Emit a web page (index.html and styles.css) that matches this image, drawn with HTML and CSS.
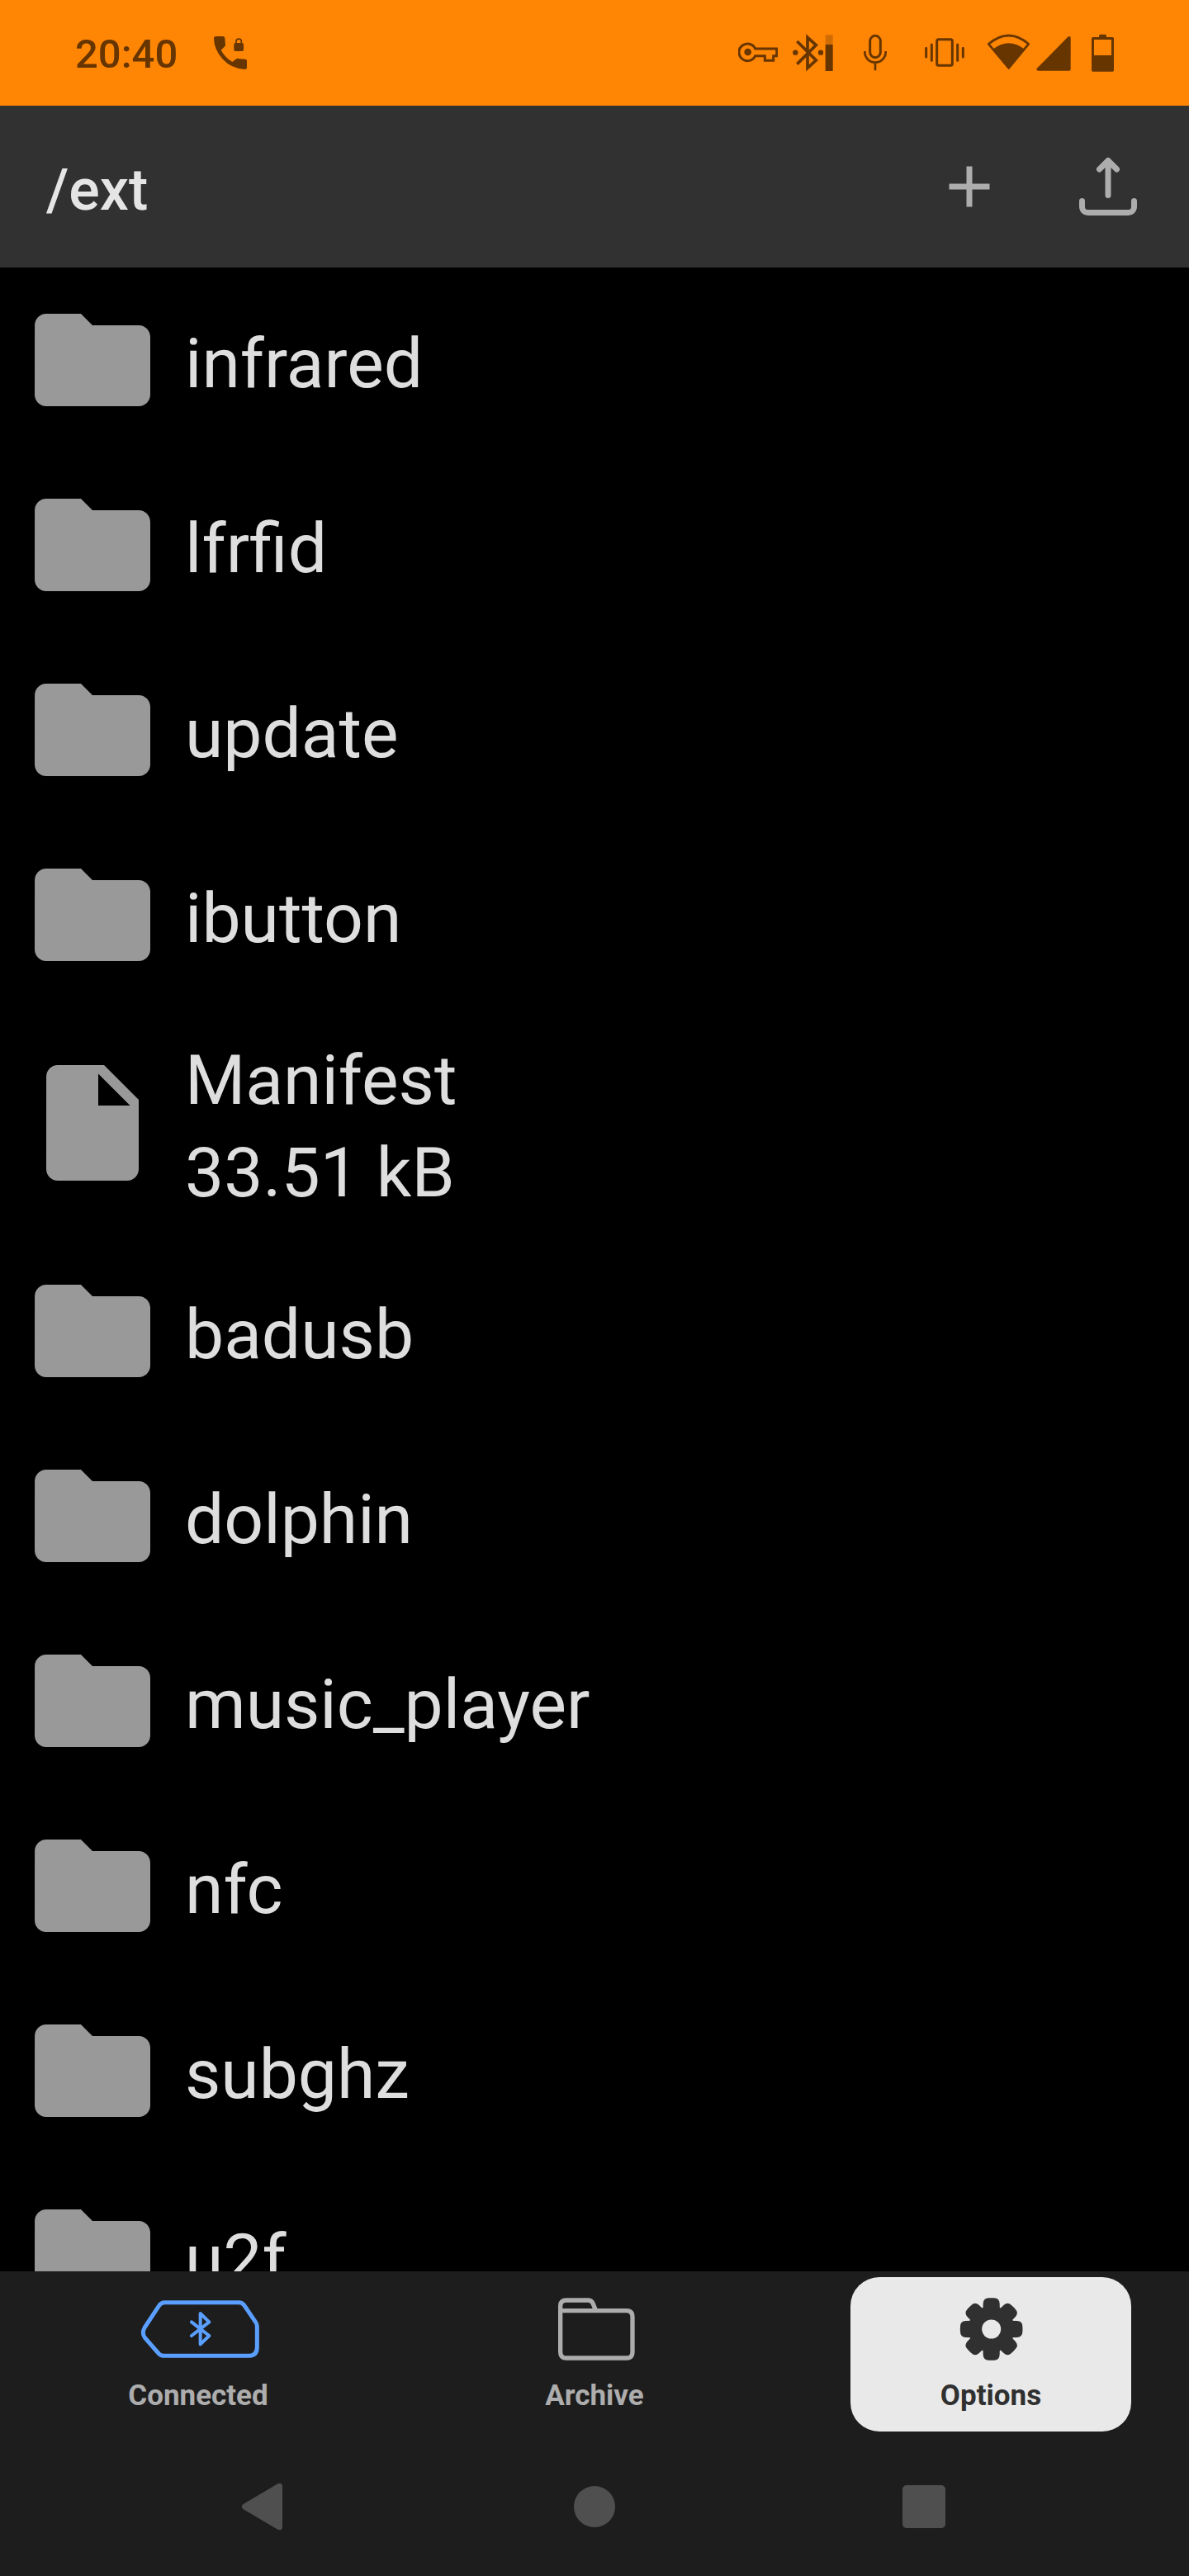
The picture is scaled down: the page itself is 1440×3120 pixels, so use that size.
FILE: index.html
```html
<!DOCTYPE html>
<html lang="en">
<head>
<meta charset="utf-8">
<meta name="viewport" content="width=device-width, initial-scale=1">
<title>/ext</title>
<link rel="stylesheet" href="styles.css">
</head>
<body>
<svg class="sprite" aria-hidden="true">
  <symbol id="folder" viewBox="0 0 24 24"><path d="M10 4H4c-1.1 0-1.99.9-1.99 2L2 18c0 1.1.9 2 2 2h16c1.1 0 2-.9 2-2V8c0-1.1-.9-2-2-2h-8l-2-2z"/></symbol>
  <symbol id="file" viewBox="0 0 24 24"><path d="M6 2c-1.1 0-1.99.9-1.99 2L4 20c0 1.1.89 2 1.99 2H18c1.1 0 2-.9 2-2V8l-6-6H6zm7 7V3.5L18.5 9H13z"/></symbol>
</svg>

<div class="status-bar">
  <span class="clock">20:40</span>
  <svg class="call" viewBox="597 60 123 144" aria-label="Secure call"><path d="M604 72h26q6 0 7 6l2 28-16 16q14 26 41 43l17-13q18 3 30 3 6 0 6 6v24q0 7-7 7-50-2-82-38-31-35-31-75 0-7 7-7z"/><path d="M676 96h23q6 0 6 6v18q0 6-6 6h-23q-6 0-6-6v-18q0-6 6-6z"/><path class="line" stroke-width="5" d="M678 98v-7a9.500 9.500 0 0 1 19 0v7"/></svg>
  <div class="status-icons">
    <svg class="key" viewBox="42 60 144 144" aria-label="VPN"><path class="line" stroke-width="9" d="M104 117H182V143H170V160H139V143H104A31 31 0 1 1 104 117Z"/><circle cx="77" cy="129" r="13"/></svg>
    <svg class="bt" viewBox="240 60 150 144" aria-label="Bluetooth"><path class="line" stroke-width="11" d="M256 90L325 159L294 187V76L325 104L256 173"/><circle cx="250" cy="131" r="9.500"/><circle cx="342" cy="131" r="9.500"/><path opacity=".3" d="M359 67h27v35h-27z"/><path d="M359 102h27v96h-27z"/></svg>
    <svg class="mic" viewBox="498 60 84 144" aria-label="Microphone"><rect class="line" stroke-width="9" x="521" y="70" width="38" height="79" rx="19"/><path class="line" stroke-width="8" d="M502 126v3a38 38 0 0 0 76 0v-3M540 168v28"/></svg>
    <svg class="vibrate" viewBox="30 60 144 144" aria-label="Vibrate"><rect class="line" stroke-width="9" x="74" y="83" width="56" height="95" rx="6"/><path class="line" stroke-width="9" stroke-linecap="round" d="M35 115v32M55 102v58M149 102v58M169 115v32"/></svg>
    <svg class="wifi" viewBox="258 60 153 144" aria-label="Wi-Fi"><path class="line" stroke-width="8" stroke-linejoin="round" d="M262 100Q335 38 407 100L335 187Z"/><path d="M279 118Q335 76 391 118L335 192Z"/></svg>
    <svg class="signal" viewBox="435 60 126 144" aria-label="Mobile signal"><path d="M549 75q11-8 11 3v113q0 6-6 6H442q-9-2-3-10z"/></svg>
    <svg class="battery" viewBox="636 60 81 144" aria-label="Battery"><path fill-rule="evenodd" d="M663 75v-5q0-5 5-5h17q5 0 5 5v5h22q5 0 5 5v115q0 5-5 5h-71q-5 0-5-5V80q0-5 5-5zM645 84v57h63V84z"/></svg>
  </div>
</div>

<header class="app-bar">
  <h1>/ext</h1>
  <button class="action" type="button" aria-label="Add"><svg viewBox="0 0 24 24"><path stroke-width="2" d="M12 5v14M5 12h14"/></svg></button>
  <button class="action" type="button" aria-label="Upload"><svg viewBox="0 0 24 24"><path stroke-width="2" stroke-linecap="round" stroke-linejoin="round" d="M3 17v2a2 2 0 0 0 2 2h14a2 2 0 0 0 2-2v-2M12 3v12M9 6l3-3 3 3"/></svg></button>
</header>

<main class="files">
  <ul>
    <li><a href="#infrared"><svg><use href="#folder"/></svg><span>infrared</span></a></li>
    <li><a href="#lfrfid"><svg><use href="#folder"/></svg><span>lfrfid</span></a></li>
    <li><a href="#update"><svg><use href="#folder"/></svg><span>update</span></a></li>
    <li><a href="#ibutton"><svg><use href="#folder"/></svg><span>ibutton</span></a></li>
    <li><a href="#manifest"><svg><use href="#file"/></svg><span>Manifest<br>33.51 kB</span></a></li>
    <li><a href="#badusb"><svg><use href="#folder"/></svg><span>badusb</span></a></li>
    <li><a href="#dolphin"><svg><use href="#folder"/></svg><span>dolphin</span></a></li>
    <li><a href="#music_player"><svg><use href="#folder"/></svg><span>music_player</span></a></li>
    <li><a href="#nfc"><svg><use href="#folder"/></svg><span>nfc</span></a></li>
    <li><a href="#subghz"><svg><use href="#folder"/></svg><span>subghz</span></a></li>
    <li><a href="#u2f"><svg><use href="#folder"/></svg><span>u2f</span></a></li>
  </ul>
</main>

<nav class="tabs">
  <a class="tab" href="#connected">
    <svg class="device" viewBox="96 357 468 252"><path stroke-width="15" d="M208 386H478Q490 386 497 396L539 458Q544 465 544 473V548Q544 580 512 580H206Q195 580 187 572L137 515Q124 498 135 478L187 399Q195 386 208 386Z"/><path stroke-width="12" stroke-linecap="round" stroke-linejoin="round" d="M306 457L370 507L338 538V426L370 457L306 507"/></svg>
    <span>Connected</span>
  </a>
  <a class="tab" href="#archive">
    <svg class="archive" viewBox="150 117 300 252"><path stroke-width="16" d="M176 176H416Q438 176 438 198V326Q438 348 416 348H198Q176 348 176 326V159Q176 138 198 138H276Q289 138 294 149L305 176"/></svg>
    <span>Archive</span>
  </a>
  <a class="tab selected" href="#options" aria-current="page">
    <svg class="gear" viewBox="474 147 252 252">
      <defs><mask id="hub"><path fill="#fff" d="M474 147h260v252h-260z"/><circle cx="602" cy="273" r="34.500" fill="#000"/></mask>
      <path id="tooth" d="M570 273L572 180Q573 160 592 160Q602 159 612 160Q631 160 632 180L634 273Z"/></defs>
      <g mask="url(#hub)"><circle cx="602" cy="273" r="84"/><use href="#tooth"/><use href="#tooth" transform="rotate(45 602 273)"/><use href="#tooth" transform="rotate(90 602 273)"/><use href="#tooth" transform="rotate(135 602 273)"/><use href="#tooth" transform="rotate(180 602 273)"/><use href="#tooth" transform="rotate(225 602 273)"/><use href="#tooth" transform="rotate(270 602 273)"/><use href="#tooth" transform="rotate(315 602 273)"/></g>
    </svg>
    <span>Options</span>
  </a>
</nav>

<div class="system-nav">
  <button type="button" aria-label="Back"><svg viewBox="0 0 60 60"><path d="M3.500 27L45 2.500Q51 0 51 6V54Q51 60 45 57.500L3.500 33Q0 30 3.500 27Z"/></svg></button>
  <button type="button" aria-label="Home"><svg viewBox="0 0 60 60"><circle cx="30" cy="30" r="25"/></svg></button>
  <button type="button" aria-label="Recent apps"><svg viewBox="0 0 60 60"><rect x="4" y="4" width="52" height="52" rx="5"/></svg></button>
</div>
</body>
</html>
```
FILE: styles.css
```css
* {
  box-sizing: border-box;
}

body {
  display: flex;
  flex-direction: column;
  height: 100vh;
  margin: 0;
  background: #000;
  font-family: Roboto, sans-serif;
}

svg {
  display: block;
  flex: none;
}

button {
  display: flex;
  align-items: center;
  justify-content: center;
  padding: 0;
  border: 0;
  background: none;
}

a {
  color: inherit;
  text-decoration: none;
}

.sprite {
  display: none;
}

/* Status bar */
.status-bar {
  display: flex;
  flex: none;
  align-items: center;
  height: 128px;
  padding: 0 91px;
  background: #ff8504;
  color: #663500;
  fill: #663500;
}

.clock {
  padding-top: 4px;
  font-size: 49px;
  font-weight: 500;
  line-height: 60px;
}

.status-bar svg {
  height: 48px;
}

.line {
  fill: none;
  stroke: #663500;
}

.call {
  width: 41px;
  margin-left: 44px;
}

.status-icons {
  display: flex;
  margin-left: auto;
}

.key,
.vibrate {
  width: 48px;
}

.bt {
  width: 50px;
  margin-left: 18px;
}

.mic {
  width: 28px;
  margin: 0 46px 0 36px;
}

.wifi {
  width: 51px;
  margin-left: 28px;
}

.signal {
  width: 42px;
  margin: 0 25px 0 8px;
}

.battery {
  width: 27px;
}

/* App bar */
.app-bar {
  display: flex;
  flex: none;
  align-items: center;
  height: 196px;
  padding: 0 14px 0 56px;
  background: #313131;
}

h1 {
  flex: 1;
  margin: 0;
  padding-top: 8px;
  color: #e5e5e5;
  font-size: 70px;
  font-weight: 500;
  line-height: 84px;
}

.action {
  width: 168px;
  height: 168px;
}

.action svg {
  width: 84px;
  height: 84px;
  fill: none;
  stroke: #adadad;
}

/* File list */
.files {
  flex: 1;
  min-height: 0;
  overflow-y: auto;
  scrollbar-width: none;
}

.files ul {
  margin: 0;
  padding: 0;
  list-style: none;
}

.files a {
  display: flex;
  align-items: center;
  gap: 28px;
  min-height: 224px;
  padding: 0 28px;
  color: #dedede;
  font-size: 84px;
  line-height: 112px;
}

.files svg {
  width: 168px;
  height: 168px;
  fill: #999;
}

.files span {
  padding: 33px 0 23px;
}

/* Bottom tabs */
.tabs {
  display: grid;
  flex: none;
  grid-template-columns: repeat(3, 1fr);
  padding: 7px 0;
  background: #1d1d1d;
}

.tab {
  display: flex;
  flex-direction: column;
  align-items: center;
  gap: 18px;
  margin: 0 70px;
  padding: 21px 0 22px;
  border-radius: 35px;
  color: #adadad;
  font-size: 35px;
  font-weight: 700;
  line-height: 42px;
}

.tab svg {
  height: 84px;
}

.selected {
  background: #e9e9e9;
  color: #303030;
}

.device {
  width: 156px;
  fill: none;
  stroke: #5a9fff;
}

.archive {
  width: 100px;
  fill: none;
  stroke: #adadad;
}

.gear {
  width: 84px;
  fill: #303030;
}

/* System navigation */
.system-nav {
  display: grid;
  flex: none;
  grid-template-columns: repeat(3, 1fr);
  height: 168px;
  padding: 0 122px;
  background: #1d1d1d;
}

.system-nav svg {
  width: 60px;
  height: 60px;
  fill: #4f4f4f;
}
```
